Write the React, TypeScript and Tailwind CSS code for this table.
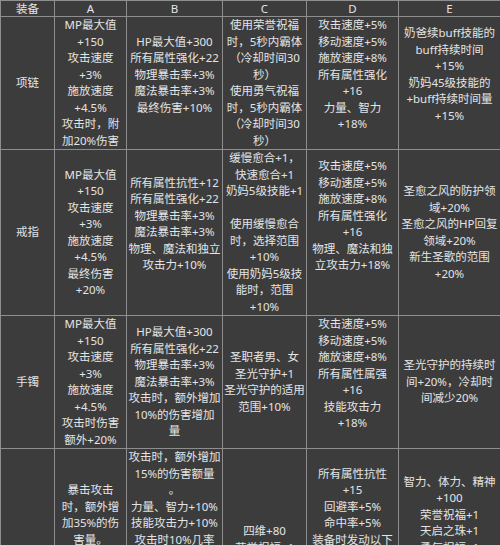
const headers = ['装备', 'A', 'B', 'C', 'D', 'E'];

// each cell is a list of lines; '' keeps an empty line like the source sheet
const rows: { name: string; cells: string[][] }[] = [
  {
    name: '项链',
    cells: [
      ['MP最大值', '+150', '攻击速度', '+3%', '施放速度', '+4.5%', '攻击时，附', '加20%伤害'],
      ['HP最大值+300', '所有属性强化+22', '物理暴击率+3%', '魔法暴击率+3%', '最终伤害+10%', ''],
      ['使用荣誉祝福', '时，5秒内霸体', '（冷却时间30', '秒）', '使用勇气祝福', '时，5秒内霸体', '（冷却时间30', '秒）'],
      ['攻击速度+5%', '移动速度+5%', '施放速度+8%', '所有属性强化', '+16', '力量、智力', '+18%', ''],
      ['奶爸续buff技能的', 'buff持续时间', '+15%', '奶妈45级技能的', '+buff持续时间量', '+15%', ''],
    ],
  },
  {
    name: '戒指',
    cells: [
      ['MP最大值', '+150', '攻击速度', '+3%', '施放速度', '+4.5%', '最终伤害', '+20%'],
      ['所有属性抗性+12', '所有属性强化+22', '物理暴击率+3%', '魔法暴击率+3%', '物理、魔法和独立', '攻击力+10%', ''],
      ['缓慢愈合+1，', '快速愈合+1', '奶妈5级技能+1', '', '使用缓慢愈合', '时，选择范围', '+10%', '使用奶妈5级技', '能时，范围', '+10%'],
      ['攻击速度+5%', '移动速度+5%', '施放速度+8%', '所有属性强化', '+16', '物理、魔法和独', '立攻击力+18%', '', ''],
      ['圣愈之风的防护领', '域+20%', '圣愈之风的HP回复', '领域+20%', '新生圣歌的范围', '+20%'],
    ],
  },
  {
    name: '手镯',
    cells: [
      ['MP最大值', '+150', '攻击速度', '+3%', '施放速度', '+4.5%', '攻击时伤害', '额外+20%'],
      ['HP最大值+300', '所有属性强化+22', '物理暴击率+3%', '魔法暴击率+3%', '攻击时，额外增加', '10%的伤害增加', '量'],
      ['圣职者男、女', '圣光守护+1', '圣光守护的适用', '范围+10%'],
      ['攻击速度+5%', '移动速度+5%', '施放速度+8%', '所有属性属强', '+16', '技能攻击力', '+18%', ''],
      ['圣光守护的持续时', '间+20%，冷却时', '间减少20%'],
    ],
  },
  {
    name: '耳环',
    cells: [
      ['暴击攻击', '时，额外增', '加35%的伤', '害量。', '', '', '', '', '', '', ''],
      ['攻击时，额外增加', '15%的伤害额量', '。', '力量、智力+10%', '技能攻击力+10%', '攻击时10%几率', '', '', '', '', '', '', '', '', ''],
      ['四维+80', '荣誉祝福+1', '', '', '', ''],
      ['所有属性抗性', '+15', '回避率+5%', '命中率+5%', '装备时发动以下', '', '', '', '', '', '', '', ''],
      ['智力、体力、精神', '+100', '荣誉祝福+1', '天启之珠+1', '勇气祝福+1', '', '', '', '', '', '', ''],
    ],
  },
];

const widths = ['w-[54px]', 'w-[72px]', 'w-[96px]', 'w-[84px]', 'w-[92px]', 'w-[102px]'];

const Lines = ({ lines }: { lines: string[] }) => (
  <>
    {lines.map((line, i) => (
      <div key={i} className="whitespace-nowrap">
        {line || '\u00a0'}
      </div>
    ))}
  </>
);

const App = () => {
  return (
    <div className="w-[500px] h-[545px] overflow-hidden bg-[#3c3c3c]">
      <table
        className="w-[500px] table-fixed border-collapse text-center text-[11.5px] leading-[16.5px] text-[#e4e4e4]"
        style={{ fontFamily: '"Noto Sans", "Noto Sans CJK SC", sans-serif' }}
      >
        <colgroup>
          {widths.map((w, i) => (
            <col key={i} className={w} />
          ))}
        </colgroup>
        <thead>
          <tr className="h-[16px]">
            {headers.map((h) => (
              <th key={h} className="border border-[#8e8e8e] p-0 font-normal leading-[15px]">
                {h}
              </th>
            ))}
          </tr>
        </thead>
        <tbody>
          {rows.map((row) => (
            <tr key={row.name}>
              <td className="border border-[#8e8e8e] p-0 align-middle">{row.name}</td>
              {row.cells.map((lines, i) => (
                <td key={i} className="border border-[#8e8e8e] p-0 align-middle">
                  <Lines lines={lines} />
                </td>
              ))}
            </tr>
          ))}
        </tbody>
      </table>
    </div>
  );
};

export default App;
